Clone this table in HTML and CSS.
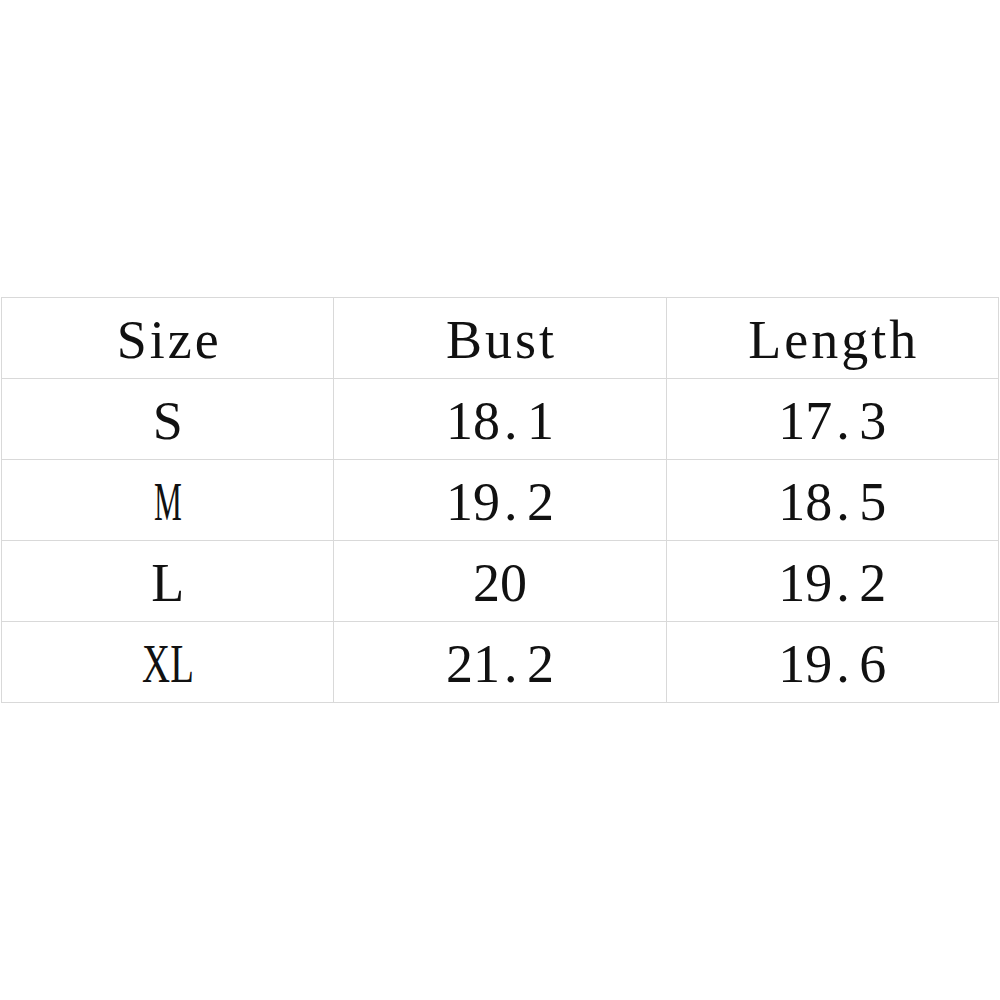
FILE: index.html
```html
<!DOCTYPE html>
<html>
<head>
<meta charset="utf-8">
<link rel="stylesheet" href="styles.css">
</head>
<body>
<main class="page">
  <table class="sizes">
    <tr class="head"><td>Size</td><td>Bust</td><td>Length</td></tr>
    <tr><td>S</td><td>18<span class="dot">.</span>1</td><td>17<span class="dot">.</span>3</td></tr>
    <tr><td><span class="narrow m">M</span></td><td>19<span class="dot">.</span>2</td><td>18<span class="dot">.</span>5</td></tr>
    <tr><td>L</td><td>20</td><td>19<span class="dot">.</span>2</td></tr>
    <tr><td><span class="narrow">XL</span></td><td>21<span class="dot">.</span>2</td><td>19<span class="dot">.</span>6</td></tr>
  </table>
</main>
</body>
</html>
```

FILE: styles.css
```css
html, body {
  margin: 0;
  padding: 0;
  background: #ffffff;
}

.page {
  height: 1000px;
  display: flex;
  align-items: center;
  justify-content: center;
  padding: 0 1px;
  box-sizing: border-box;
}

.sizes {
  width: 100%;
  border-collapse: collapse;
  table-layout: fixed;
  font-family: "Liberation Serif", "Times New Roman", serif;
  font-size: 54px;
  color: #111111;
}

.sizes td {
  height: 77px;
  padding: 3px 0 0 0;
  border: 1px solid #d9d9d9;
  text-align: center;
  vertical-align: middle;
  line-height: 1;
}

.head td {
  letter-spacing: 3px;
  padding-left: 3px;
}

.dot {
  display: inline-block;
  width: 27px;
  text-align: left;
  text-indent: 4px;
}

.narrow {
  display: inline-block;
  transform: scaleX(0.72);
}

.narrow.m {
  transform: scaleX(0.58);
}
```
